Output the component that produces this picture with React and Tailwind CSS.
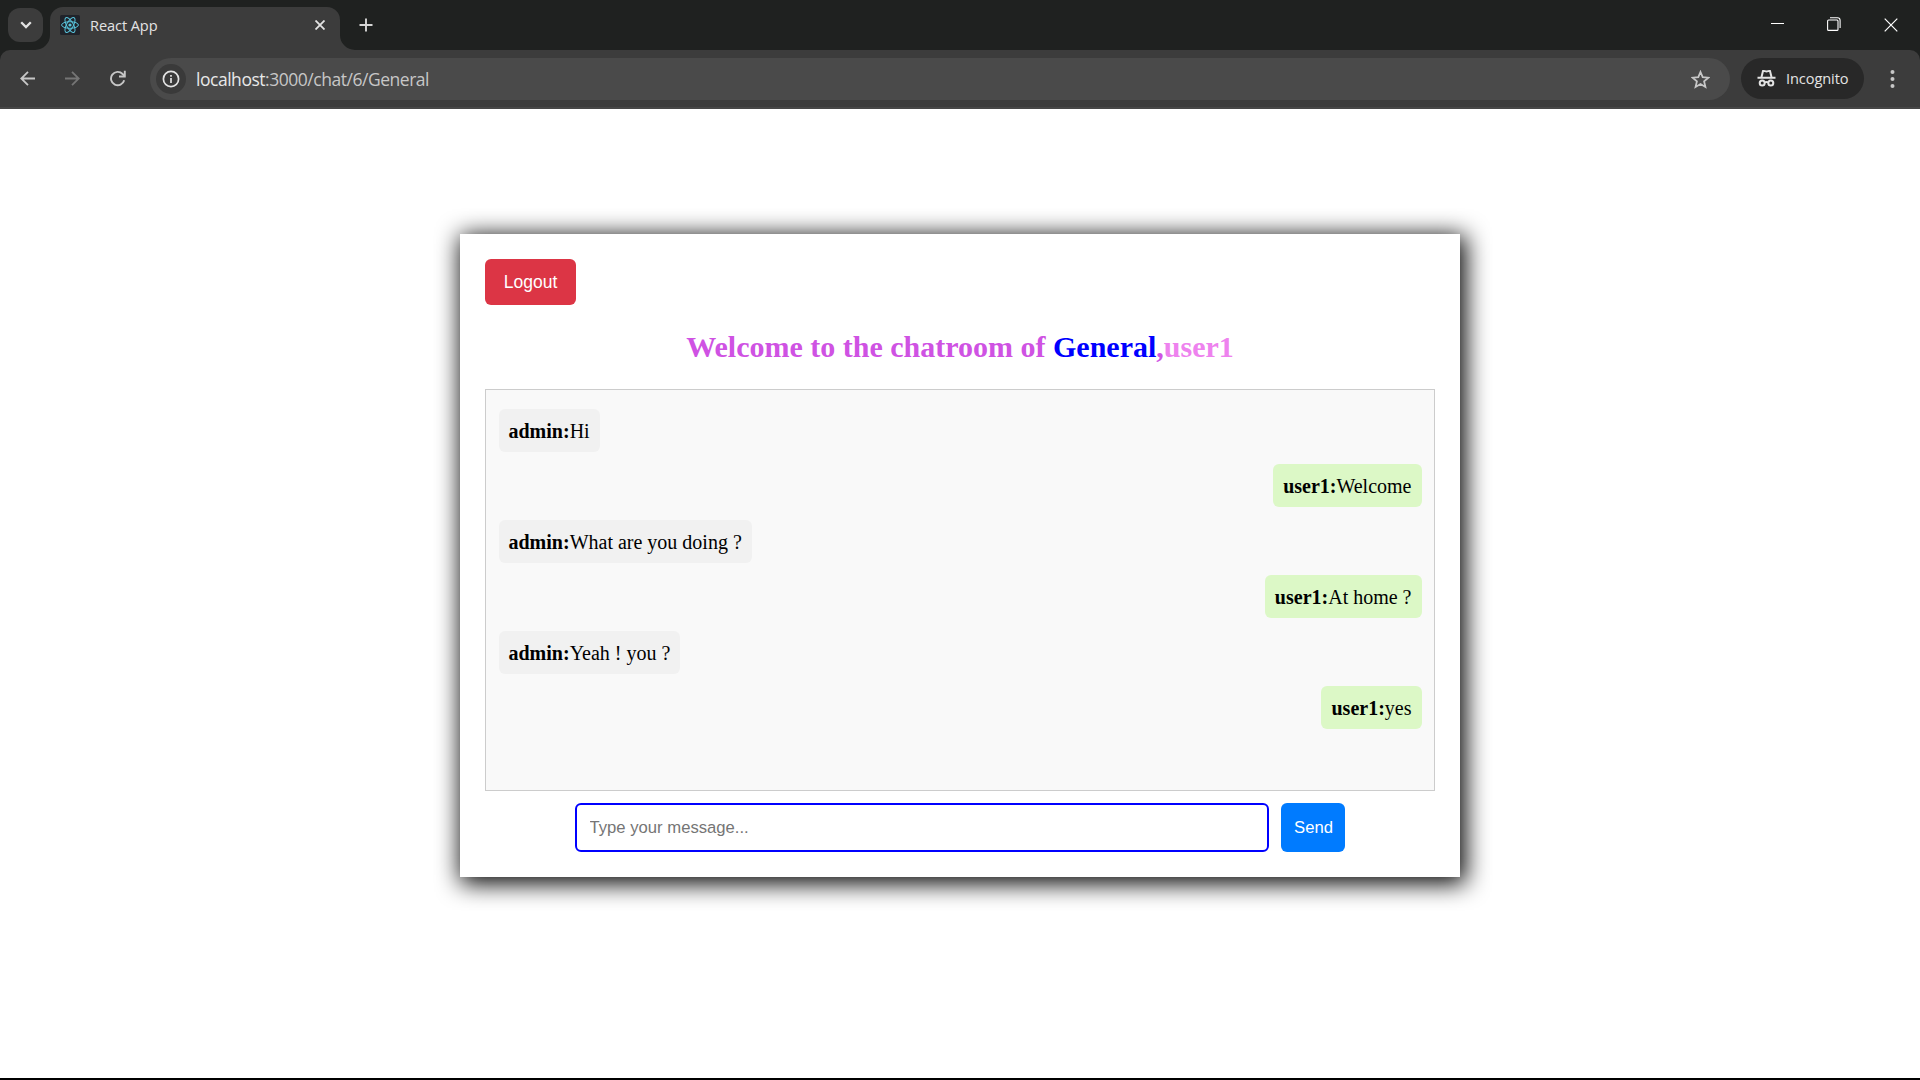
const messages = [
  { user: "admin", text: "Hi" },
  { user: "user1", text: "Welcome" },
  { user: "admin", text: "What are you doing ?" },
  { user: "user1", text: "At home ?" },
  { user: "admin", text: "Yeah ! you ?" },
  { user: "user1", text: "yes" },
];

function ReactLogo() {
  return (
    <svg width="20" height="20" viewBox="0 0 20 20" fill="none" stroke="#58c4dc" strokeWidth="1">
      <rect width="20" height="20" rx="1.5" fill="#20232a" stroke="none" />
      <ellipse cx="10" cy="10" rx="8.4" ry="3.3" />
      <ellipse cx="10" cy="10" rx="8.4" ry="3.3" transform="rotate(60 10 10)" />
      <ellipse cx="10" cy="10" rx="8.4" ry="3.3" transform="rotate(120 10 10)" />
      <circle cx="10" cy="10" r="1.6" fill="#58c4dc" stroke="none" />
    </svg>
  );
}

function TabStrip() {
  return (
    <div className="flex h-[50px] items-start bg-[#1f2120]">
      <button className="ml-2 mt-2 flex h-[34px] w-[35px] items-center justify-center rounded-[12px] bg-[#3c3c3c]">
        <svg width="12" height="8" viewBox="0 0 12 8" fill="none" stroke="#e3e3e3" strokeWidth="2.3">
          <path d="M1.2 1.2 6 6l4.8-4.8" />
        </svg>
      </button>
      <svg className="mt-[35px] ml-[-8px]" width="15" height="15" viewBox="0 0 15 15">
        <path d="M15 0v15H0A15 15 0 0 0 15 0Z" fill="#3c3c3c" />
      </svg>
      <div className="mt-[7px] flex h-[43px] w-[290px] items-start rounded-t-[13px] bg-[#3c3c3c] pt-2 pl-[10px]">
        <ReactLogo />
        <span className="ml-[10px] w-[220px] text-[14.6px] leading-[21px] tracking-[-0.1px] text-[#e3e3e3]">React App</span>
        <svg className="mt-[5px] ml-[5px] shrink-0" width="10" height="10" viewBox="0 0 10 10" stroke="#e3e3e3" strokeWidth="1.8">
          <path d="m.5.5 9 9M9.5.5l-9 9" />
        </svg>
      </div>
      <svg className="mt-[35px]" width="15" height="15" viewBox="0 0 15 15">
        <path d="M0 0v15h15A15 15 0 0 1 0 0Z" fill="#3c3c3c" />
      </svg>
      <svg className="mt-[18px] ml-[4px]" width="14" height="14" viewBox="0 0 14 14" stroke="#d6d6d6" strokeWidth="1.9">
        <path d="M7 .5v13M.5 7h13" />
      </svg>
      <div className="ml-auto flex h-[50px] items-center pr-[22px]">
        <svg width="13" height="13" viewBox="0 0 13 13" className="mb-[5px]" stroke="#fff">
          <path d="M0 7.5h13" />
        </svg>
        <svg width="14" height="14" viewBox="0 0 14 14" className="ml-[43px] mb-[2px]" fill="none" stroke="#fff" strokeWidth="1.1">
          <rect x=".6" y="3" width="10.4" height="10.4" rx="1" />
          <path d="M3 .8h7.5a2.6 2.6 0 0 1 2.6 2.6V11" />
        </svg>
        <svg width="14" height="14" viewBox="0 0 14 14" className="ml-[43px] mb-px" stroke="#fff" strokeWidth="1.2">
          <path d="m.7.7 12.6 12.6M13.3.7.7 13.3" />
        </svg>
      </div>
    </div>
  );
}

function Toolbar() {
  return (
    <div className="bg-[#1f2120]">
      <div className="flex h-[59px] items-start rounded-t-[10px] border-b-2 border-[#474747] bg-[#3c3c3c] pt-2">
        <svg className="mt-[13px] ml-5 shrink-0" width="15" height="15" viewBox="0 0 15 15" fill="none" stroke="#c7c7c7" strokeWidth="1.8">
          <path d="M15 7.5H1.3M8 .8 1.3 7.5 8 14.2" />
        </svg>
        <svg className="mt-[13px] ml-[30px] shrink-0" width="15" height="15" viewBox="0 0 15 15" fill="none" stroke="#757575" strokeWidth="1.8">
          <path d="M0 7.5h13.7M7 .8l6.7 6.7L7 14.2" />
        </svg>
        <svg className="mt-[12px] ml-[30px] shrink-0" width="16" height="17" viewBox="0 0 16 17" fill="none" stroke="#c7c7c7" strokeWidth="1.9">
          <path d="M14.2 10.3A6.7 6.7 0 1 1 12.6 4l2 2.2" />
          <path d="M14.8.8v5.7H9" />
        </svg>
        <div className="ml-6 flex h-[42px] w-[1580px] items-center rounded-full bg-[#4a4a4a] pl-[6px]">
          <div className="flex size-[30px] items-center justify-center rounded-full bg-[#3a3a3a]">
            <svg width="18" height="18" viewBox="0 0 18 18" fill="none" stroke="#e3e3e3" strokeWidth="1.7">
              <circle cx="9" cy="9" r="7.6" />
              <path d="M9 8v5M9 5v1.8" />
            </svg>
          </div>
          <div className="ml-[10px] text-[17.5px] leading-6 tracking-[-0.47px] text-[#c7c7c7]">
            <span className="text-[#e8e8e8]">localhost</span>:3000/chat/6/General
          </div>
          <svg className="mr-5 ml-auto" width="19" height="19" viewBox="0 0 19 19" fill="none" stroke="#c7c7c7" strokeWidth="1.8">
            <path d="m9.5 2 2.2 5.2 5.7.5-4.3 3.7 1.3 5.5-4.9-2.9-4.9 2.9 1.3-5.5L1.6 7.7l5.7-.5Z" />
          </svg>
        </div>
        <div className="ml-[11px] flex h-[41px] w-[123px] items-center rounded-full bg-[#282828] pl-4">
          <svg width="19" height="18" viewBox="0 0 19 18" className="mb-[2px]" fill="none" stroke="#e3e3e3" strokeWidth="2">
            <path d="M.5 8.8h18M4.4 8.5l1.6-6.5c1.3-.5 2 .5 3.5.5s2.2-1 3.5-.5l1.6 6.5" />
            <circle cx="5.2" cy="14" r="2.5" />
            <circle cx="13.8" cy="14" r="2.5" />
            <path d="M7.8 13.4q1.7-.8 3.4 0" />
          </svg>
          <span className="mb-[2px] ml-[10px] text-[14.6px] leading-5 tracking-[-0.1px] text-[#e3e3e3]">Incognito</span>
        </div>
        <svg className="mt-3 ml-[26px]" width="5" height="18" viewBox="0 0 5 18" fill="#c7c7c7">
          <circle cx="2.5" cy="2" r="2" />
          <circle cx="2.5" cy="9" r="2" />
          <circle cx="2.5" cy="16" r="2" />
        </svg>
      </div>
    </div>
  );
}

function Message({ user, text }) {
  const own = user === "user1";
  return (
    <div
      className={
        own
          ? "self-end rounded-[6px] bg-[#dcf8c6] px-[10px] pt-[11px] pb-[9px] leading-[23px]"
          : "self-start rounded-[6px] bg-[#f1f1f1] px-[10px] pt-[11px] pb-[9px] leading-[23px]"
      }
    >
      <strong>{user}:</strong>
      {text}
    </div>
  );
}

export default function App() {
  return (
    <div className="flex h-[1080px] w-[1920px] flex-col overflow-hidden border-b-2 border-black bg-white font-['Open_Sans','Noto_Sans',sans-serif]">
      <TabStrip />
      <Toolbar />
      <main className="flex flex-1 flex-col items-center pt-[125px]">
        <section className="flex h-[643px] w-[1000px] flex-col bg-white p-[25px] font-['Liberation_Serif',serif] text-[20px] text-black shadow-[2.5px_3.5px_23px_3px_#000]">
          <button className="h-[46px] w-[91px] self-start rounded-[6px] bg-[#dc3545] font-['Liberation_Sans',sans-serif] text-[17.5px] text-white">
            Logout
          </button>
          <h2 className="mt-[25px] mb-[25px] text-center text-[30px] leading-[34px] font-bold text-[#cf52e3]">
            Welcome to the chatroom of <span className="text-[#0000ff]">General</span>,
            <span className="text-[#ee82ee]">user1</span>
          </h2>
          <div className="flex h-[402px] shrink-0 flex-col gap-[12.4px] border border-[#cccccc] bg-[#f9f9f9] px-[12.5px] pt-[19px]">
            {messages.map((m) => (
              <Message key={m.text} {...m} />
            ))}
          </div>
          <form className="mt-3 flex justify-center gap-3 font-['Liberation_Sans',sans-serif] text-[16.67px]">
            <input
              className="h-[49px] w-[694px] rounded-[6px] border-2 border-[#0000ff] px-[12.5px] outline-none placeholder:text-[#757575]"
              placeholder="Type your message..."
            />
            <button type="button" className="h-[49px] w-16 rounded-[6px] bg-[#007bff] pl-px text-white">
              Send
            </button>
          </form>
        </section>
      </main>
    </div>
  );
}
